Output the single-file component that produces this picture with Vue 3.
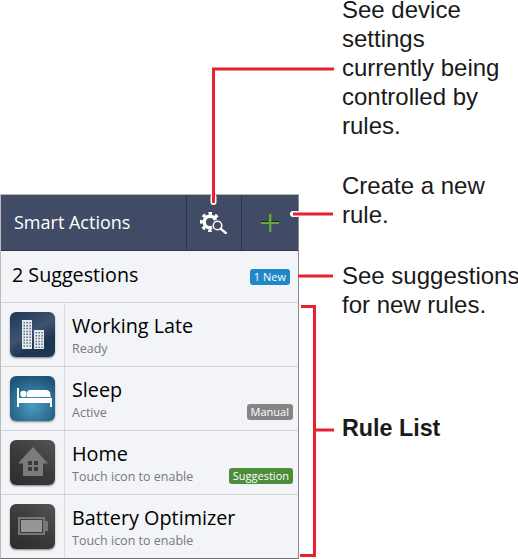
<template>
  <div class="page">
    <div class="phone">
      <header class="action-bar">
        <div class="bar-title">Smart Actions</div>
        <button class="bar-btn gear-btn" aria-label="Device settings">
          <svg width="28" height="22" viewBox="0 0 28 22">
            <circle cx="10" cy="10" r="5.800" fill="none" stroke="#fff" stroke-width="3.600" />
            <circle cx="10" cy="10" r="8.600" fill="none" stroke="#fff" stroke-width="3" stroke-dasharray="3.400 3.353" stroke-dashoffset="1.700" />
            <circle cx="17.500" cy="13.500" r="6" fill="#414b65" />
            <circle cx="17.500" cy="13.500" r="4.300" fill="none" stroke="#fff" stroke-width="1.500" />
            <path d="M20.800 16.800l5 4.200" stroke="#fff" stroke-width="2.300" stroke-linecap="round" />
          </svg>
        </button>
        <button class="bar-btn plus-btn" aria-label="Create rule">
          <svg width="18" height="18" viewBox="0 0 18 18">
            <path d="M0 8h18v2H0z" fill="#62a83a" />
            <path d="M8 0h2.400v18H8z" fill="#62a83a" />
            <path d="M0 7h8v1H0zM10.400 7H18v1h-7.600z" fill="#20281e" />
          </svg>
        </button>
      </header>

      <div class="suggestions">
        <span class="suggestions-text">2 Suggestions</span>
        <span class="badge blue">1 New</span>
      </div>

      <div v-for="rule in rules" :key="rule.name" class="rule-row">
        <div class="icon-cell">
          <div class="rule-icon" :class="rule.kind">
            <svg width="45" height="45" viewBox="0 0 45 45">
              <template v-if="rule.kind === 'work'">
                <path fill="#e4e9ee" d="M12 8h10v29H12zM24 18h10v19H24z" />
                <path fill="#5d7088" :d="windows" />
              </template>
              <template v-else-if="rule.kind === 'sleep'">
                <path fill="#fff" d="M7 12h2v10h31v-1h-23v-4c0-1.500 1-3 3-3h15c4 0 5.500 2 5.500 5v3h1.500v9h-2v-4H9v4H7z" />
                <circle cx="13.500" cy="18" r="3.200" fill="#fff" />
              </template>
              <template v-else-if="rule.kind === 'home'">
                <path fill="#7b7b7b" d="M23 7L8 23.500h5V36h20V23.500h5z" />
                <path fill="#3a3a3a" d="M18 21h4v4h-4zM24 21h4v4h-4zM18 27h4v4h-4zM24 27h4v4h-4z" />
              </template>
              <template v-else>
                <path fill="#777" fill-rule="evenodd" d="M8 13h27v4h3v10h-3v4H8zM10 15v14h23V15z" />
                <rect x="11" y="16" width="21" height="12" fill="#969696" />
              </template>
            </svg>
          </div>
        </div>
        <div class="rule-body">
          <div class="rule-name">{{ rule.name }}</div>
          <div class="rule-status">{{ rule.status }}</div>
        </div>
        <span v-if="rule.tag" class="badge tag" :class="rule.tagColor">{{ rule.tag }}</span>
      </div>
    </div>

    <!-- callouts sit on top of the screenshot, so they are placed by hand -->
    <div class="note note-settings">See device<br />settings<br />currently being<br />controlled by<br />rules.</div>
    <div class="note note-create">Create a new<br />rule.</div>
    <div class="note note-suggest">See suggestions<br />for new rules.</div>
    <div class="note note-list">Rule List</div>

    <svg class="leaders" width="518" height="559" viewBox="0 0 518 559">
      <g fill="none" stroke="#fff" stroke-width="6" stroke-linecap="round">
        <path d="M213.500 197v5" />
        <path d="M293 214h4" />
      </g>
      <g fill="none" stroke="#e8212e" stroke-width="3">
        <path d="M334 69H213.500v134" />
        <path d="M333 214H293" />
        <path d="M333 276H298" />
        <path d="M301 306.500h13.500V555.500H300" />
        <path d="M314 430h20" />
      </g>
    </svg>
  </div>
</template>

<script setup>
const rules = [
  { name: "Working Late", status: "Ready", kind: "work" },
  { name: "Sleep", status: "Active", kind: "sleep", tag: "Manual", tagColor: "grey" },
  { name: "Home", status: "Touch icon to enable", kind: "home", tag: "Suggestion", tagColor: "green" },
  { name: "Battery Optimizer", status: "Touch icon to enable", kind: "battery" },
];

// little window grid for the two buildings
const grid = (x, y, cols, rows) => {
  let d = "";
  for (let c = 0; c < cols; c++) {
    for (let r = 0; r < rows; r++) {
      d += `M${x + c * 2.9} ${y + r * 2.9}h1.500v1.500h-1.500z`;
    }
  }
  return d;
};
const windows = grid(13.500, 10, 3, 9) + grid(25.500, 20, 3, 6);
</script>

<style scoped>
.page {
  position: relative;
  width: 518px;
  height: 559px;
  overflow: hidden;
  background: #fff;
  font-family: "Open Sans", sans-serif;
}

.phone {
  position: absolute;
  left: 0;
  top: 194px;
  width: 299px;
  height: 365px;
  box-sizing: border-box;
  border-top: 1px solid #b4b6b8;
  border-left: 1px solid #b9bbbd;
  border-right: 1px solid #8a8c8e;
  border-bottom: 1px solid #6d6e70;
  background: #f2f4f7;
  display: flex;
  flex-direction: column;
}

.action-bar {
  display: flex;
  height: 56px;
  flex: none;
  background: #414b65;
  border-bottom: 1px solid #2e3648;
  box-sizing: border-box;
}

.bar-title {
  flex: 1;
  align-self: center;
  padding: 0 0 2px 13px;
  color: #fff;
  font-size: 18px;
}

.bar-btn {
  padding: 0;
  border: none;
  background: none;
  border-left: 1px solid #2c3447;
  display: flex;
  align-items: center;
  justify-content: center;
}

.gear-btn {
  width: 55px;
}

.plus-btn {
  width: 57px;
}

.suggestions {
  display: flex;
  flex: none;
  align-items: center;
  justify-content: space-between;
  height: 52px;
  padding: 0 8px 0 11px;
  border-bottom: 1px solid #d2d4d6;
  box-sizing: border-box;
}

.suggestions-text {
  font-size: 19.700px;
  color: #000;
  margin-top: -4px;
}

.badge {
  color: #fff;
  font-size: 11px;
  line-height: 16px;
  border-radius: 3px;
  padding: 0 4px;
}

.blue {
  background: #2087c8;
}

.grey {
  background: #858585;
}

.green {
  background: #4d8c3a;
}

.rule-row {
  position: relative;
  display: flex;
  flex: none;
  height: 64px;
  border-bottom: 1px solid #d2d4d6;
  box-sizing: border-box;
}

.rule-row:last-child {
  border-bottom: none;
  flex: 1;
}

.icon-cell {
  width: 63px;
  flex: none;
  border-right: 1px solid #d8dadc;
  display: flex;
  align-items: center;
  justify-content: center;
}

.rule-icon {
  width: 45px;
  height: 45px;
  border-radius: 6px;
  box-shadow: 0 1px 2px rgba(0, 0, 0, 0.5), 0 0 2px 1px rgba(255, 255, 255, 0.7);
}

.rule-icon svg {
  display: block;
}

.work {
  background: linear-gradient(150deg, #1e3856, #3e5370 45%, #1c3553 70%);
}

.sleep {
  background: radial-gradient(circle at 50% 65%, #4b9cc5, #1f5678 80%);
}

.home,
.battery {
  background: linear-gradient(215deg, #555, #3b3b3b 50%, #2c2c2c);
}

.rule-body {
  padding: 8px 0 0 7px;
}

.rule-name {
  font-size: 19.800px;
  line-height: 29px;
  color: #000;
}

.rule-status {
  font-size: 12.500px;
  line-height: 17px;
  color: #77797b;
}

.tag {
  position: absolute;
  right: 5px;
  bottom: 10px;
}

.note {
  position: absolute;
  left: 342px;
  font-family: "Liberation Sans", sans-serif;
  font-size: 24px;
  line-height: 29px;
  color: #1a1a1a;
  white-space: nowrap;
}

.note-settings {
  top: -5px;
}

.note-create {
  top: 171px;
}

.note-suggest {
  top: 261px;
}

.note-list {
  top: 414px;
  font-size: 23.300px;
  font-weight: 700;
}

.leaders {
  position: absolute;
  left: 0;
  top: 0;
  pointer-events: none;
}
</style>
